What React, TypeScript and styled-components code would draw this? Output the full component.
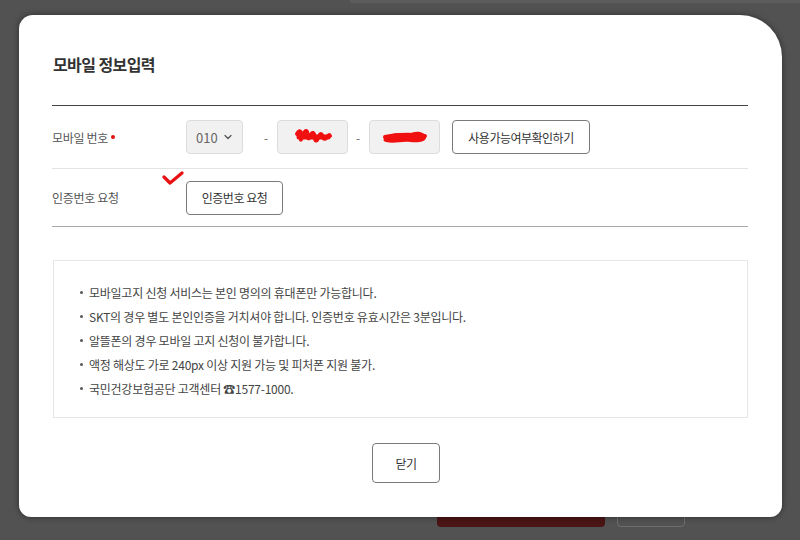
import React from "react";
import styled, { createGlobalStyle } from "styled-components";
import { ChevronDown } from "lucide-react";

const Global = createGlobalStyle`
  html, body { margin: 0; padding: 0; }
  body {
    background: #525252;
    font-family: "Noto Sans CJK KR", "Noto Sans", sans-serif;
    width: 800px;
    height: 540px;
    overflow: hidden;
  }
`;

const Page = styled.div`
  position: relative;
  width: 800px;
  height: 540px;
  background: #525252;
  display: flex;
  flex-direction: column;
  justify-content: flex-end;
`;

const TopStrip = styled.div`
  position: absolute;
  top: 0;
  left: 350px;
  right: 0;
  height: 3px;
  background: #5c5c5c;
`;

const BgActions = styled.div`
  display: flex;
  gap: 12px;
  padding: 0 0 13px 437px;
`;

const BgButton = styled.div<{ $primary?: boolean }>`
  width: ${(p) => (p.$primary ? 168 : 68)}px;
  height: 40px;
  border-radius: 4px;
  box-sizing: border-box;
  background: ${(p) => (p.$primary ? "#4b1515" : "transparent")};
  border: ${(p) => (p.$primary ? "none" : "1px solid #6e6e6e")};
`;

const Modal = styled.div`
  position: absolute;
  left: 19px;
  top: 15px;
  width: 763px;
  height: 502px;
  box-sizing: border-box;
  background: #fff;
  border-radius: 14px 42px 12px 12px;
  box-shadow: 0 0 6px rgba(0, 0, 0, 0.45);
  padding: 0 34px 0 33px;
  display: flex;
  flex-direction: column;
`;

const Title = styled.h2`
  margin: 0;
  padding: 39px 0 0 1px;
  height: 50px;
  box-sizing: border-box;
  font-size: 16px;
  font-weight: 700;
  letter-spacing: -0.6px;
  color: #333;
  line-height: 20px;
`;

const FormTable = styled.div`
  margin-top: 40px;
  border-top: 1px solid #444;
  border-bottom: 1px solid #a8a8a8;
  display: flex;
  flex-direction: column;
`;

const Row = styled.div<{ $h: number; $last?: boolean }>`
  height: ${(p) => p.$h}px;
  display: flex;
  align-items: center;
  border-bottom: ${(p) => (p.$last ? "none" : "1px solid #e3e3e3")};
  position: relative;
`;

const Label = styled.div`
  width: 134px;
  flex: none;
  font-size: 12px;
  letter-spacing: -0.3px;
  color: #555;
  display: flex;
  align-items: center;
`;

const Required = styled.span`
  width: 4px;
  height: 4px;
  border-radius: 50%;
  background: #e01010;
  margin-left: 3px;
`;

const Field = styled.div`
  display: flex;
  align-items: center;
`;

const Select = styled.div`
  width: 57px;
  height: 34px;
  box-sizing: border-box;
  background: #f1f1f1;
  border: 1px solid #dcdcdc;
  border-radius: 4px;
  display: flex;
  align-items: center;
  justify-content: space-between;
  padding: 0 8px 0 9px;
  font-size: 13px;
  color: #666;
  svg { color: #555; }
`;

const Dash = styled.span<{ $w: number; $pl: number }>`
  width: ${(p) => p.$w}px;
  box-sizing: border-box;
  padding-left: ${(p) => p.$pl}px;
  font-size: 12px;
  color: #666;
`;

const Input = styled.div<{ $w: number }>`
  width: ${(p) => p.$w}px;
  height: 34px;
  box-sizing: border-box;
  background: #f1f1f1;
  border: 1px solid #dcdcdc;
  border-radius: 4px;
  display: flex;
  align-items: center;
  justify-content: center;
`;

const Button = styled.button<{ $w: number; $h?: number }>`
  width: ${(p) => p.$w}px;
  height: ${(p) => p.$h ?? 34}px;
  box-sizing: border-box;
  background: #fff;
  border: 1px solid #7a7a7a;
  border-radius: 4px;
  font-family: inherit;
  font-size: 12px;
  letter-spacing: -0.5px;
  color: #333;
  padding: 0;
  cursor: pointer;
`;

const CheckMark = styled.svg`
  position: absolute;
  left: 110px;
  top: 2px;
`;

const InfoBox = styled.ul`
  margin: 33px 0 0 1px;
  border: 1px solid #e6e6e6;
  list-style: none;
  padding: 19px 20px 17px 24px;
  height: 158px;
  box-sizing: border-box;
`;

const InfoItem = styled.li`
  display: flex;
  align-items: center;
  height: 24px;
  font-size: 12px;
  letter-spacing: -0.25px;
  color: #444;
  &::before {
    content: "";
    width: 3px;
    height: 3px;
    border-radius: 50%;
    background: #555;
    margin: 0 6px 0 2px;
    flex: none;
  }
`;

const Footer = styled.div`
  display: flex;
  justify-content: center;
  padding: 25px 0 0 12px;
`;

const Scribble1 = () => (
  <svg width="40" height="22" viewBox="0 0 40 22">
    <path
      d="M4 8 C6 4 9 4 8 12 C7 18 10 6 13 5 C15 4 14 14 16 12 C18 9 19 5 21 8 C22 12 22 16 24 14 C26 11 27 6 29 9 C30 12 31 14 33 12 C35 10 36 8 37 10"
      stroke="#f01010"
      strokeWidth="4"
      fill="none"
      strokeLinecap="round"
    />
    <path d="M6 11 L35 11" stroke="#f01010" strokeWidth="5" strokeLinecap="round" />
  </svg>
);

const Scribble2 = () => (
  <svg width="50" height="22" viewBox="0 0 50 22">
    <path
      d="M4 13 C10 8 16 6 22 8 C28 9 34 5 40 6 C44 7 46 9 46 12 C45 16 38 17 30 16 C22 15 14 18 6 16 C3 15 3 14 4 13 Z"
      fill="#f01010"
    />
    <path d="M5 11 C14 9 28 8 45 10" stroke="#f01010" strokeWidth="4" fill="none" strokeLinecap="round" />
  </svg>
);

const items = [
  "모바일고지 신청 서비스는 본인 명의의 휴대폰만 가능합니다.",
  "SKT의 경우 별도 본인인증을 거치셔야 합니다. 인증번호 유효시간은 3분입니다.",
  "알뜰폰의 경우 모바일 고지 신청이 불가합니다.",
  "액정 해상도 가로 240px 이상 지원 가능 및 피처폰 지원 불가.",
  "국민건강보험공단 고객센터 ☎1577-1000.",
];

export default function App() {
  return (
    <>
      <Global />
      <Page>
        <TopStrip />
        <BgActions>
          <BgButton $primary />
          <BgButton />
        </BgActions>
        <Modal>
          <Title>모바일 정보입력</Title>
          <FormTable>
            <Row $h={62}>
              <Label>
                모바일 번호<Required />
              </Label>
              <Field>
                <Select>
                  <span>010</span>
                  <ChevronDown size={12} strokeWidth={2.5} />
                </Select>
                <Dash $w={34} $pl={21}>-</Dash>
                <Input $w={71}>
                  <Scribble1 />
                </Input>
                <Dash $w={21} $pl={8}>-</Dash>
                <Input $w={71}>
                  <Scribble2 />
                </Input>
                <Button $w={138} style={{ marginLeft: 12 }}>
                  사용가능여부확인하기
                </Button>
              </Field>
            </Row>
            <Row $h={57} $last>
              <Label>인증번호 요청</Label>
              <CheckMark width="22" height="14" viewBox="0 0 22 14">
                <path
                  d="M2 6 L8 12 L20 2"
                  stroke="#e81010"
                  strokeWidth="3.2"
                  fill="none"
                  strokeLinecap="round"
                  strokeLinejoin="round"
                />
              </CheckMark>
              <Button $w={97}>인증번호 요청</Button>
            </Row>
          </FormTable>
          <InfoBox>
            {items.map((t) => (
              <InfoItem key={t}>{t}</InfoItem>
            ))}
          </InfoBox>
          <Footer>
            <Button $w={68} $h={40}>
              닫기
            </Button>
          </Footer>
        </Modal>
      </Page>
    </>
  );
}
